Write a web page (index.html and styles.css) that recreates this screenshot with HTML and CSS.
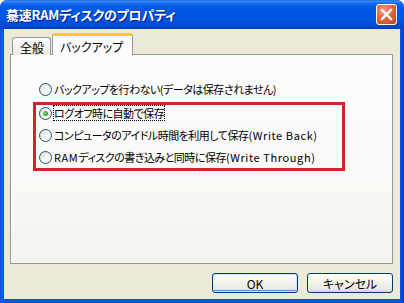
FILE: index.html
```html
<!DOCTYPE html>
<html lang="ja">
<head>
<meta charset="utf-8">
<title>驀速RAMディスクのプロパティ</title>
<link rel="stylesheet" href="styles.css">
</head>
<body>
<div class="window">
  <div class="titlebar">
    <span class="title">驀速RAMディスクのプロパティ</span>
    <span class="close" aria-label="閉じる">
      <svg width="13" height="13" viewBox="0 0 13 13"><path d="M2 2 L11 11 M11 2 L2 11" stroke="#fff" stroke-width="2.4" stroke-linecap="square"/></svg>
    </span>
  </div>
  <div class="client">
    <div class="tabs">
      <div class="tab">全般</div>
      <div class="tab active">バックアップ</div>
    </div>
    <div class="panel">
      <div class="options">
        <label class="opt single"><span class="radio"></span><span class="label">バックアップを行わない(データは保存されません)</span></label>
        <div class="highlight">
          <label class="opt"><span class="radio checked"></span><span class="label focus">ログオフ時に自動で保存</span></label>
          <label class="opt"><span class="radio"></span><span class="label">コンピュータのアイドル時間を利用して保存<span class="en">(Write Back)</span></span></label>
          <label class="opt"><span class="radio"></span><span class="label"><span class="en">RAM</span>ディスクの書き込みと同時に保存<span class="en">(Write Through)</span></span></label>
        </div>
      </div>
    </div>
    <div class="buttons">
      <div class="btn default">OK</div>
      <div class="btn">キャンセル</div>
    </div>
  </div>
</div>
</body>
</html>
```
FILE: styles.css
```css
* { box-sizing: border-box; }
html, body { margin: 0; padding: 0; }
body {
  width: 404px;
  height: 303px;
  overflow: hidden;
  background: #fff;
  font-family: "Noto Sans CJK JP", "DejaVu Sans", sans-serif;
  font-size: 12px;
  color: #000;
}
.window {
  width: 404px;
  height: 303px;
  display: flex;
  flex-direction: column;
  background: linear-gradient(to right, #0831D9 0, #166AEE 1px, #0055E5 3px, #0055E5 calc(100% - 3px), #0831D9 100%);
  border-radius: 7px 7px 0 0;
  overflow: hidden;
}
.titlebar {
  height: 29px;
  flex: none;
  display: flex;
  align-items: center;
  padding: 0 7px 1px 6px;
  background: linear-gradient(to bottom, #0A5FD8 0, #3C8EF7 1px, #0E64EE 4px, #0058E6 8px, #0055E3 18px, #004DD6 24px, #0045CA 27px, #003FBF 29px);
  border-radius: 7px 7px 0 0;
}
.title {
  flex: 1;
  color: #fff;
  font-weight: bold;
  font-size: 13px;
  letter-spacing: -0.2px;
  font-feature-settings: "palt";
  text-shadow: 1px 1px 0 #0A1883;
  padding-top: 1px;
}
.close {
  width: 21px;
  height: 21px;
  border: 1px solid #fff;
  border-radius: 3px;
  background: radial-gradient(circle at 35% 30%, #F29A7C 0, #E5653F 45%, #C8401A 100%);
  display: flex;
  align-items: center;
  justify-content: center;
}
.client {
  flex: 1;
  margin: 0 4px 4px 4px;
  background: #ECE9D8;
  padding: 4px 7px 0 6px;
  display: flex;
  flex-direction: column;
}
.tabs {
  display: flex;
  align-items: flex-end;
  padding-left: 2px;
  height: 22px;
  position: relative;
  z-index: 1;
  margin-bottom: -1px;
}
.tab {
  height: 18px;
  padding: 2px 6px 0 7px;
  background: linear-gradient(to bottom, #FFFFFF 0, #F6F6F3 40%, #ECEBE6 100%);
  border: 1px solid #919B9C;
  border-bottom: none;
  border-radius: 3px 3px 0 0;
  line-height: 15px;
  font-size: 12px;
}
.tab.active {
  height: 22px;
  margin-left: 1px;
  padding: 4px 9px 0 7px;
  background: #FCFCFE;
  border-top: 3px solid #FFC83C;
  border-radius: 3px 3px 0 0;
  box-shadow: inset 0 -1px 0 #FCFCFE;
  font-feature-settings: "palt";
  line-height: 13px;
}
.panel {
  height: 210px;
  border: 1px solid #919B9C;
  background: linear-gradient(to bottom, #FCFCFE 0, #F9F9F7 60%, #F4F3EE 100%);
  padding: 27px 0 0 22px;
}
.options {
  display: flex;
  flex-direction: column;
  gap: 6px;
}
.opt {
  display: flex;
  align-items: center;
  height: 14px;
  gap: 2px;
  font-size: 11px;
  font-feature-settings: "palt";
  letter-spacing: -0.5px;
}
.opt.single {
  padding-left: 6px;
}
.en {
  letter-spacing: 0.6px;
}
.highlight {
  width: 312px;
  border: 3px solid #D2232C;
  padding: 1px 0 4px 3px;
  display: flex;
  flex-direction: column;
  gap: 8px;
}
.radio {
  width: 13px;
  height: 13px;
  flex: none;
  border-radius: 50%;
  border: 1px solid #1C5180;
  background: linear-gradient(135deg, #DCDBD5 0, #F5F4F0 50%, #FFFFFF 100%);
  position: relative;
}
.radio.checked::after {
  content: "";
  position: absolute;
  left: 3px;
  top: 3px;
  width: 5px;
  height: 5px;
  border-radius: 50%;
  background: radial-gradient(circle at 40% 40%, #8BE38B 0, #2DA12D 60%, #1A841A 100%);
}
.label {
  white-space: nowrap;
  line-height: 14px;
}
.label.focus {
  outline: 1px dotted #000;
  outline-offset: 0;
}
.buttons {
  display: flex;
  justify-content: flex-end;
  gap: 9px;
  padding-top: 9px;
}
.btn {
  width: 86px;
  height: 20px;
  border: 1px solid #003C74;
  border-radius: 3px;
  background: linear-gradient(to bottom, #FFFFFF 0, #F4F4F0 40%, #E8E8E0 85%, #D6D0C5 100%);
  display: flex;
  align-items: center;
  justify-content: center;
  font-size: 12px;
  font-feature-settings: "palt";
}
.btn.default {
  box-shadow: inset 0 0 0 1px #CEE7FF, inset 0 -1px 0 1px #6982EE;
}
```
